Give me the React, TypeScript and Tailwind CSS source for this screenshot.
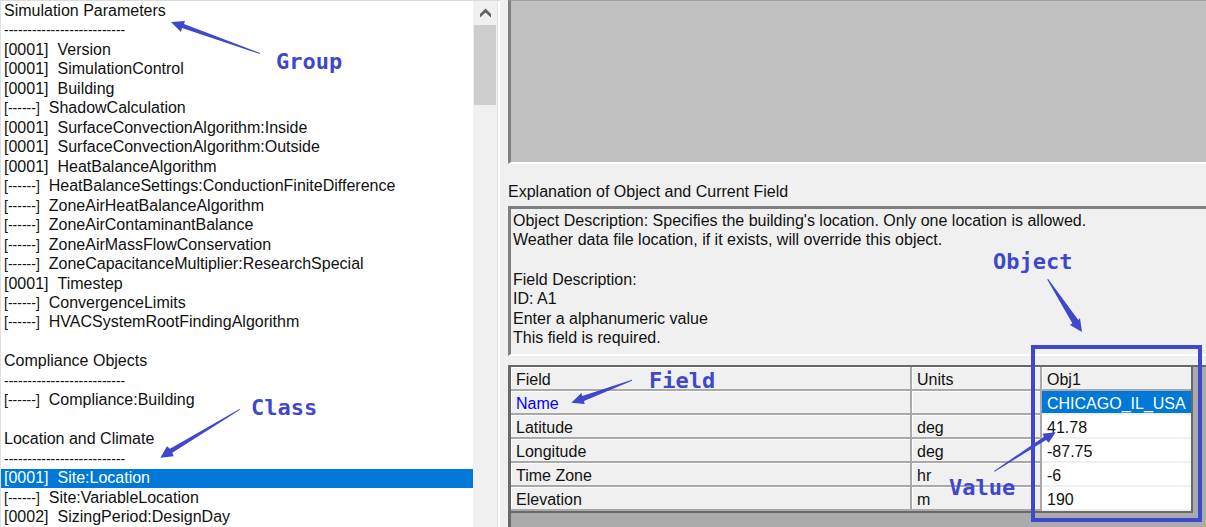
import { useState } from "react";

type Entry =
  | { kind: "group"; name: string }
  | { kind: "class"; count: string; name: string }
  | { kind: "blank" };

const group = (name: string): Entry => ({ kind: "group", name });
const cls = (count: string, name: string): Entry => ({ kind: "class", count, name });
const blank: Entry = { kind: "blank" };

const NONE = "------";

const entries: Entry[] = [
  group("Simulation Parameters"),
  cls("0001", "Version"),
  cls("0001", "SimulationControl"),
  cls("0001", "Building"),
  cls(NONE, "ShadowCalculation"),
  cls("0001", "SurfaceConvectionAlgorithm:Inside"),
  cls("0001", "SurfaceConvectionAlgorithm:Outside"),
  cls("0001", "HeatBalanceAlgorithm"),
  cls(NONE, "HeatBalanceSettings:ConductionFiniteDifference"),
  cls(NONE, "ZoneAirHeatBalanceAlgorithm"),
  cls(NONE, "ZoneAirContaminantBalance"),
  cls(NONE, "ZoneAirMassFlowConservation"),
  cls(NONE, "ZoneCapacitanceMultiplier:ResearchSpecial"),
  cls("0001", "Timestep"),
  cls(NONE, "ConvergenceLimits"),
  cls(NONE, "HVACSystemRootFindingAlgorithm"),
  blank,
  group("Compliance Objects"),
  cls(NONE, "Compliance:Building"),
  blank,
  group("Location and Climate"),
  cls("0001", "Site:Location"),
  cls(NONE, "Site:VariableLocation"),
  cls("0002", "SizingPeriod:DesignDay"),
];

const description = [
  "Object Description: Specifies the building's location. Only one location is allowed.",
  "Weather data file location, if it exists, will override this object.",
  "",
  "Field Description:",
  "ID: A1",
  "Enter a alphanumeric value",
  "This field is required.",
];

const fields = [
  { name: "Name", units: "", value: "CHICAGO_IL_USA" },
  { name: "Latitude", units: "deg", value: "41.78" },
  { name: "Longitude", units: "deg", value: "-87.75" },
  { name: "Time Zone", units: "hr", value: "-6" },
  { name: "Elevation", units: "m", value: "190" },
];

function ClassList() {
  const [selected, setSelected] = useState("Site:Location");
  return (
    <ul className="flex min-w-0 flex-1 flex-col border-l border-[#e0e0e0] bg-white">
      {entries.map((entry, i) => {
        if (entry.kind === "blank") return <li key={i} className="flex-1" />;
        if (entry.kind === "group")
          return (
            <li key={i} className="flex flex-2 flex-col pl-[3px]">
              <span className="flex flex-1 items-center">{entry.name}</span>
              <span className="flex flex-1 items-center text-sm leading-4">{"-".repeat(26)}</span>
            </li>
          );
        const active = entry.name === selected;
        return (
          <li key={i} className="flex flex-1">
            <button
              type="button"
              onClick={() => setSelected(entry.name)}
              className={`flex flex-1 items-center gap-[9px] pl-[3px] text-left ${
                active ? "bg-[#0078d7] text-white" : ""
              }`}
            >
              <span className={entry.count === NONE ? "text-sm leading-4" : ""}>[{entry.count}]</span>
              <span>{entry.name}</span>
            </button>
          </li>
        );
      })}
    </ul>
  );
}

function ScrollBar() {
  return (
    <div className="flex w-[27px] shrink-0 flex-col items-start border-r-2 border-white bg-[#f0f0f0]">
      <div className="flex w-full flex-1 flex-col border-r border-[#e3e3e3]">
        <button type="button" aria-label="Scroll up" className="flex h-6 w-6 items-center justify-center">
          <svg width="13" height="10" viewBox="0 0 13 10" fill="#606060">
            <path d="M6.5 0.5 12 6V9.6L6.5 4.6 1 9.6V6Z" />
          </svg>
        </button>
        <div className="ml-px h-20 w-[22px] bg-[#cdcdcd]" />
      </div>
    </div>
  );
}

function FieldTable() {
  const head =
    "border-r-2 border-b-2 border-[#a9a9a9] bg-[#f0f0f0] px-[5px] pt-[3px] text-left font-normal shadow-[inset_1px_1px_#fff]";
  return (
    <table className="w-full table-fixed border-separate border-spacing-0">
      <colgroup>
        <col />
        <col className="w-[130px]" />
        <col className="w-[149px]" />
      </colgroup>
      <thead>
        <tr className="h-6">
          <th scope="col" className={head}>Field</th>
          <th scope="col" className={head}>Units</th>
          <th
            scope="col"
            className="border-b-2 border-[#a9a9a9] bg-[#f0f0f0] px-[5px] pt-[3px] text-left font-normal shadow-[inset_1px_1px_#fff]"
          >
            Obj1
          </th>
        </tr>
      </thead>
      <tbody>
        {fields.map((f, i) => (
          <tr key={f.name} className="h-6">
            <th scope="row" className={`${head} ${i === 0 ? "text-[#0000ff]" : ""}`}>{f.name}</th>
            <td className={head}>{f.units}</td>
            <td
              className={`border-b-2 border-[#f0f0f0] px-[5px] pt-[3px] whitespace-nowrap ${
                i === 0 ? "bg-[#0078d7] text-white" : "bg-white"
              }`}
            >
              {f.value}
            </td>
          </tr>
        ))}
      </tbody>
    </table>
  );
}

function Arrow({ className, width, height, points }: { className: string; width: number; height: number; points: string }) {
  return (
    <svg aria-hidden="true" className={`absolute ${className}`} width={width} height={height} fill="#3f48cc">
      <polygon points={points} />
    </svg>
  );
}

function Annotations() {
  const label = "absolute font-['DejaVu_Sans_Mono',monospace] text-[22px] leading-6 font-bold";
  return (
    <div className="pointer-events-none absolute inset-0 overflow-hidden text-[#3f48cc]">
      <span className={`${label} top-[50px] left-[276px]`}>Group</span>
      <Arrow className="top-5 left-[170px]" width={92} height={36} points="1,2 15,1 14,4 90,33 90,34 12,8 11,12" />
      <span className={`${label} top-[396px] left-[251px]`}>Class</span>
      <Arrow className="top-[408px] left-[160px]" width={82} height={52} points="0.3,49.7 7,38.3 10,40.7 79.5,1 80,1.8 12.3,44.7 13.7,48.3" />
      <span className={`${label} top-[250px] left-[993px]`}>Object</span>
      <Arrow className="top-[278px] left-[1046px]" width={38} height={56} points="36,54 24,47 26.3,45.3 1.2,1.5 2.2,1 32.3,42 34,40" />
      <span className={`${label} top-[369px] left-[649px]`}>Field</span>
      <Arrow className="top-[378px] left-[570px]" width={64} height={28} points="1.3,24.7 11.3,15 12.3,18 62,1.8 62,2.8 14,23 14.7,26" />
      <span className={`${label} top-[476px] left-[949px]`}>Value</span>
      <Arrow className="top-[430px] left-[993px]" width={65} height={44} points="62.7,2.3 49.3,3.7 51,6.7 1,41 1.6,41.8 53,10 55.7,12.7" />
      <div className="absolute top-[345px] left-[1031px] h-[177px] w-[171px] border-4 border-[#3f48cc]" />
    </div>
  );
}

export default function App() {
  return (
    <div className="relative grid min-h-screen grid-cols-[minmax(0,500fr)_minmax(0,706fr)] bg-[#f0f0f0] font-['Liberation_Sans',Arial,sans-serif] text-base leading-[18px] text-[#111]">
      <aside className="flex border-t border-[#dcdcdc]">
        <ClassList />
        <ScrollBar />
      </aside>

      <main className="flex min-w-0 flex-col pl-2">
        <div className="h-[164px] border-t border-b-2 border-l-[3px] border-t-[#a0a0a0] border-b-white border-l-[#808080] bg-[#c0c0c0]" />
        <h2 className="flex h-[42px] items-center pt-[14px]">Explanation of Object and Current Field</h2>
        <section className="flex h-[150px] flex-col border-t-[3px] border-b-2 border-l-[3px] border-t-[#808080] border-b-white border-l-[#808080] pt-[2px] pb-[6px] pl-[2px]">
          {description.map((line, i) => (
            <p key={i} className="flex flex-1 items-center">{line}</p>
          ))}
        </section>
        <section className="mt-[9px] flex-1 border-t-2 border-l-[3px] border-[#696969] bg-[#ababab] pr-[13px]">
          <div className="border-r-2 border-b-2 border-[#696969]">
            <FieldTable />
          </div>
        </section>
      </main>

      <Annotations />
    </div>
  );
}
